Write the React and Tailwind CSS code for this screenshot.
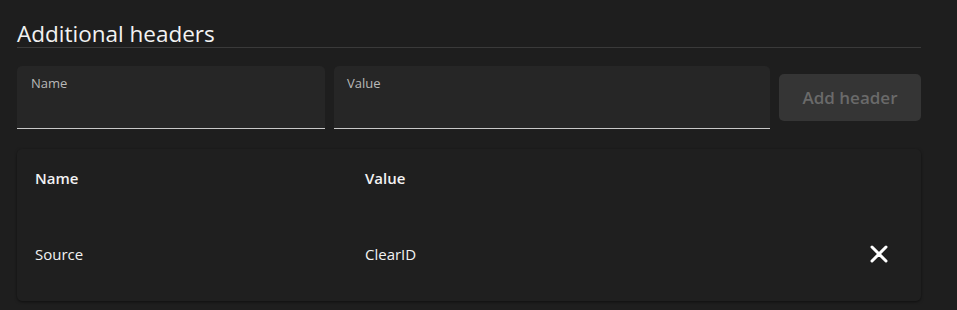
import React from "react";

export default function App() {
  return (
    <div
      className="w-full h-[310px] bg-[#1e1e1e] px-[17px] overflow-hidden"
      style={{ fontFamily: '"Open Sans", "Noto Sans", sans-serif' }}
    >
      <div className="w-[904px]">
        <div className="pt-[20px] border-b border-[#3a3a3a]">
          <h2 className="text-[22.5px] leading-[27px] text-[#f2f2f2] font-normal">Additional headers</h2>
        </div>
        <div className="mt-[18px] flex items-center gap-[9px]">
          <div className="w-[308px] h-[63px] bg-[#262626] rounded-t-[5px] border-b border-[#c8c8c8] px-[14px] pt-[8px]">
            <div className="text-[13px] leading-[18px] text-[#b8b8b8]">Name</div>
          </div>
          <div className="w-[436px] h-[63px] bg-[#262626] rounded-t-[5px] border-b border-[#c8c8c8] px-[13px] pt-[8px]">
            <div className="text-[13px] leading-[18px] text-[#b8b8b8]">Value</div>
          </div>
          <button className="w-[142px] h-[47px] bg-[#353535] rounded-[5px] text-[17px] font-semibold text-[#6a6a6a]">
            Add header
          </button>
        </div>
        <div className="mt-[20px] rounded-[5px] bg-[#1f1f1f] shadow-[0_1px_3px_rgba(0,0,0,0.5)]">
          <div className="flex items-center h-[58px] text-[15px] font-semibold text-[#f2f2f2]">
            <div className="w-[348px] pl-[18px]">Name</div>
            <div className="flex-1">Value</div>
          </div>
          <div className="flex items-center h-[94px] text-[15px] text-[#f2f2f2]">
            <div className="w-[348px] pl-[18px]">Source</div>
            <div className="flex-1">ClearID</div>
            <div className="mr-[33px] flex">
              <svg width="18" height="18" viewBox="0 0 18 18" fill="none">
                <path d="M2 2L16 16M16 2L2 16" stroke="#ffffff" strokeWidth="3" strokeLinecap="round" />
              </svg>
            </div>
          </div>
        </div>
      </div>
    </div>
  );
}
